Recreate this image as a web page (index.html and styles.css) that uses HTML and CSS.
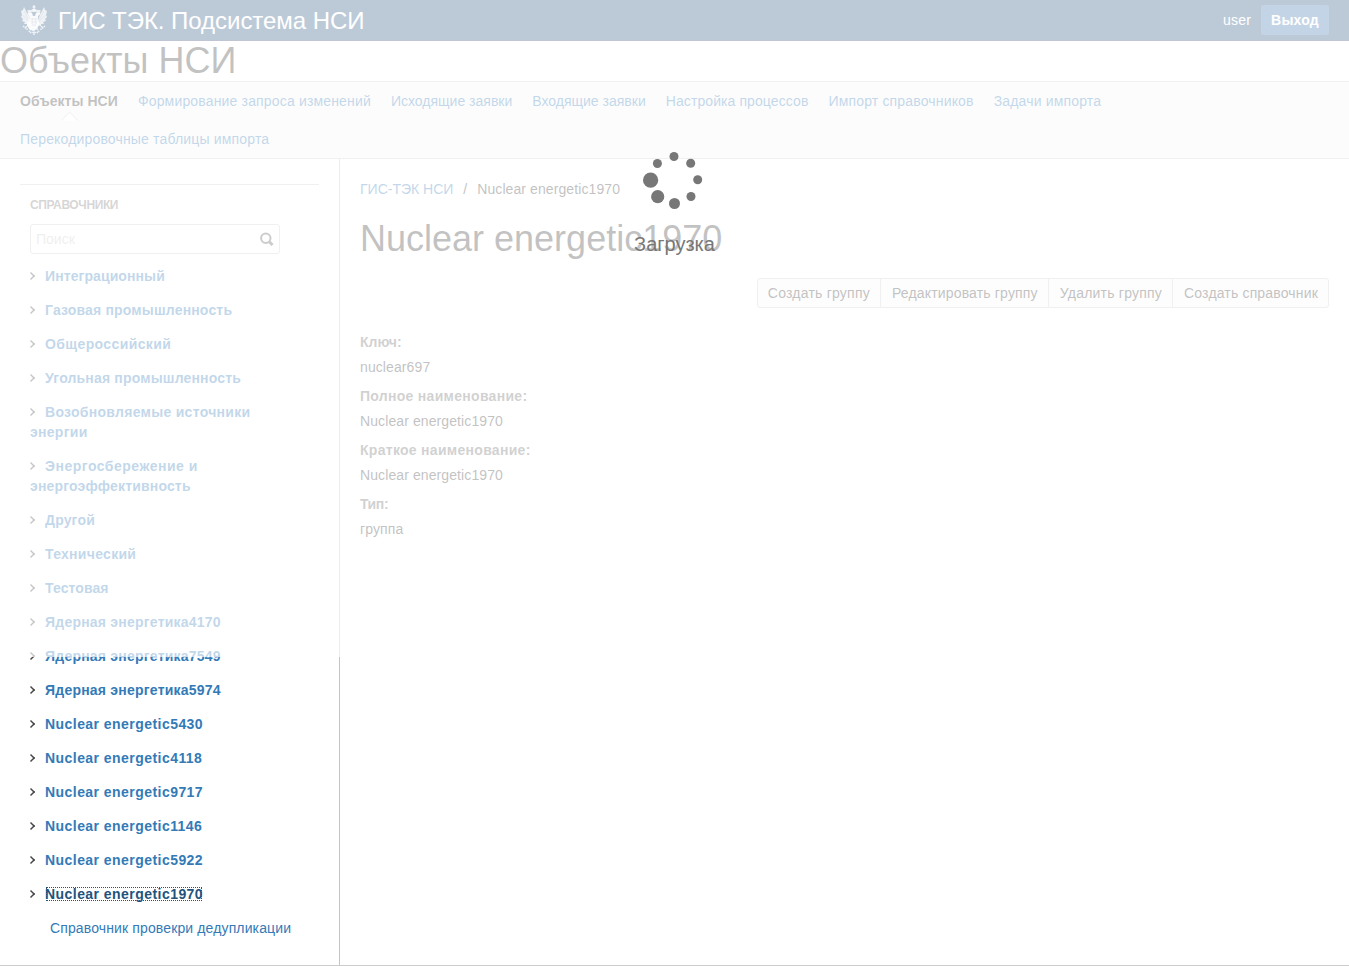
FILE: index.html
```html
<!DOCTYPE html>
<html lang="ru">
<head>
<meta charset="utf-8">
<title>ГИС ТЭК. Подсистема НСИ</title>
<link rel="stylesheet" href="styles.css">
</head>
<body>
<header class="topbar">
  <svg class="emblem" width="26" height="30" viewBox="0 0 26 30" fill="#fff">
    <path d="M13 0v6M11.500 2h3" stroke="#fff" stroke-width="1"/>
    <path d="M11 4h4l1 3h-6zM6.500 5h4v2.500h-4zM15.500 5h4v2.500h-4z" opacity=".75"/>
    <path d="M6 9l2-2 3 1 1 3h2l1-3 3-1 2 2-3 2v4l1 5-2 4-4 2-4-2-2-4 1-5v-4z" opacity=".9"/>
    <path d="M9 15L8 12 4 4 3 2 2 5 0 6l1 4-1 2 2 2-1 2 3 1-1 2 3 0 0 2 4-2zM17 15l1-3 4-8 1-2 1 3 2 1-1 4 1 2-2 2 1 2-3 1 1 2-3 0 0 2-4-2z" opacity=".78"/>
    <path d="M9 18l-5 5M17 18l5 5M2 21l5 4M24 21l-5 4M11 22l-3 5M15 22l3 5M13 22v8M9 27.500h8" stroke="#fff" stroke-width="1.500" stroke-dasharray="1.500 .7" fill="none" opacity=".8"/>
    <path d="M3 6l5 9M1.500 10l7 7M23 6l-5 9M24.500 10l-7 7M5 5l4 9M21 5l-4 9M11 13v6M15 13v6M11 14h4M11 17h4M11 20h4" stroke="#204e7d" stroke-width=".6" fill="none" opacity=".5"/>
  </svg>
  <span class="brand">ГИС ТЭК. Подсистема НСИ</span>
  <span class="user">user</span>
  <button class="logout">Выход</button>
</header>
<h1 class="page-title">Объекты НСИ</h1>
<nav class="menu">
  <a class="menu-item active">Объекты НСИ</a>
  <a class="menu-item ls-2">Формирование запроса изменений</a>
  <a class="menu-item">Исходящие заявки</a>
  <a class="menu-item">Входящие заявки</a>
  <a class="menu-item ls-1">Настройка процессов</a>
  <a class="menu-item ls-2">Импорт справочников</a>
  <a class="menu-item ls-2">Задачи импорта</a>
  <a class="menu-item ls-2">Перекодировочные таблицы импорта</a>
</nav>
<div class="columns">
  <aside class="sidebar">
    <div class="side-head">СПРАВОЧНИКИ</div>
    <div class="search"><span>Поиск</span>
      <svg width="14" height="14" viewBox="0 0 14 14" fill="none" stroke="#555" stroke-width="2"><circle cx="5.800" cy="6.300" r="4.700"/><path d="M9.200 9.700l3.400 3.400" stroke-width="2.800"/></svg>
    </div>
    <ul class="tree">
      <li><i class="chev"></i><a class="ls-1">Интеграционный</a></li>
      <li><i class="chev"></i><a class="ls-2">Газовая промышленность</a></li>
      <li><i class="chev"></i><a class="ls-4">Общероссийский</a></li>
      <li><i class="chev"></i><a class="ls-2">Угольная промышленность</a></li>
      <li><i class="chev"></i><a class="ls-3">Возобновляемые источники<br>энергии</a></li>
      <li><i class="chev"></i><a class="ls-5">Энергосбережение и</a><br><a class="ls-2">энергоэффективность</a></li>
      <li><i class="chev"></i><a class="ls-2">Другой</a></li>
      <li><i class="chev"></i><a class="ls-3">Технический</a></li>
      <li><i class="chev"></i><a class="ls-1">Тестовая</a></li>
      <li><i class="chev"></i><a class="ls-25">Ядерная энергетика4170</a></li>
      <li><i class="chev"></i><a class="ls-25">Ядерная энергетика7549</a></li>
      <li><i class="chev"></i><a class="ls-25">Ядерная энергетика5974</a></li>
      <li><i class="chev"></i><a class="ls-45">Nuclear energetic5430</a></li>
      <li><i class="chev"></i><a class="ls-45">Nuclear energetic4118</a></li>
      <li><i class="chev"></i><a class="ls-45">Nuclear energetic9717</a></li>
      <li><i class="chev"></i><a class="ls-45">Nuclear energetic1146</a></li>
      <li><i class="chev"></i><a class="ls-45">Nuclear energetic5922</a></li>
      <li><i class="chev"></i><a class="ls-45 focused">Nuclear energetic1970</a></li>
      <li class="leaf"><a>Справочник провекри дедупликации</a></li>
    </ul>
  </aside>
  <main class="content">
    <div class="crumbs"><a>ГИС-ТЭК НСИ</a><span class="slash">/</span><span class="ls-1">Nuclear energetic1970</span></div>
    <h2 class="group-title">Nuclear energetic1970</h2>
    <div class="actions">
      <div class="btn-group">
        <button class="ls-25">Создать группу</button>
        <button class="ls-2">Редактировать группу</button>
        <button class="ls-25">Удалить группу</button>
        <button class="ls-2">Создать справочник</button>
      </div>
    </div>
    <dl class="props">
      <dt>Ключ:</dt><dd>nuclear697</dd>
      <dt class="ls-3">Полное наименование:</dt><dd>Nuclear energetic1970</dd>
      <dt class="ls-3">Краткое наименование:</dt><dd>Nuclear energetic1970</dd>
      <dt class="tight">Тип:</dt><dd>группа</dd>
    </dl>
  </main>
</div>
<div class="overlay"></div>
<div class="loader">
  <svg width="60" height="58" viewBox="0 0 60 58" fill="#777">
    <circle cx="31" cy="4.500" r="4.500"/><circle cx="47.700" cy="11.200" r="4.500"/>
    <circle cx="54.700" cy="27.700" r="4.500"/><circle cx="48" cy="44.500" r="4.500"/>
    <circle cx="31.500" cy="51.500" r="5.500"/><circle cx="14.700" cy="44.700" r="6.600"/>
    <circle cx="7.600" cy="28.200" r="7.600"/><circle cx="14.400" cy="11.500" r="4.500"/>
  </svg>
  <div class="loader-text">Загрузка</div>
</div>
</body>
</html>
```
FILE: styles.css
```css
* { box-sizing: border-box; }
body {
  margin: 0;
  height: 966px;
  overflow: hidden;
  position: relative;
  display: flex;
  flex-direction: column;
  background: #fff;
  font: 14px/20px "Liberation Sans", Arial, sans-serif;
  color: #333;
}
button { font: inherit; color: inherit; white-space: nowrap; }
a { color: #337ab7; }

/* Tracking steps */
.ls-1 { letter-spacing: .09px; }
.ls-2 { letter-spacing: .165px; }
.ls-25 { letter-spacing: .22px; }
.ls-3 { letter-spacing: .29px; }
.ls-4 { letter-spacing: .38px; }
.ls-45 { letter-spacing: .45px; }
.ls-5 { letter-spacing: .5px; }
.tight { letter-spacing: -.4px; }

.topbar {
  height: 41px;
  flex: none;
  display: flex;
  align-items: center;
  padding: 0 20px 1px;
  background: #204e7d;
  border-bottom: 1px solid #2b3e6b;
  color: #fff;
}
.emblem { margin: 1px 11px 0 1px; }
.brand { font-size: 24px; line-height: 40px; white-space: nowrap; padding-top: 2px; letter-spacing: -.04px; }
.user { margin-left: auto; margin-right: 10px; letter-spacing: .2px; }
.logout {
  width: 68px;
  height: 30px;
  padding: 0;
  border: 0;
  border-radius: 3px;
  background: #3a71b0;
  font-weight: bold;
  letter-spacing: .2px;
}

.page-title, .group-title { font-size: 36px; line-height: 40px; font-weight: normal; }
.page-title { margin: 0; flex: none; }

.menu {
  height: 78px;
  flex: none;
  display: flex;
  flex-wrap: wrap;
  align-content: flex-start;
  column-gap: 20px;
  padding: 0 20px;
  background: #f6f6f6;
  border-top: 1px solid #ccc;
  border-bottom: 1px solid #ccc;
}
.menu-item { line-height: 38px; height: 38px; white-space: nowrap; }
.active { position: relative; color: #333; font-weight: bold; letter-spacing: .05px; }
.active::after {
  content: "";
  position: absolute;
  left: 50%;
  bottom: -7px;
  width: 12px;
  height: 12px;
  margin-left: -6px;
  background: linear-gradient(135deg, #fff 50%, transparent 50%);
  border-left: 1px solid #ccc;
  border-top: 1px solid #ccc;
  transform: rotate(45deg);
  clip-path: polygon(0 0, 100% 0, 0 100%);
}

.columns { flex: 1; display: flex; border-bottom: 1px solid #ccc; }
.sidebar { width: 340px; flex: none; padding: 25px 20px 0; border-right: 1px solid #c4c4c4; }
.side-head {
  border-top: 1px solid #ccc;
  padding: 10px 10px 0;
  height: 40px;
  font-size: 12px;
  font-weight: bold;
  letter-spacing: -.38px;
  color: #777;
}
.search {
  width: 250px;
  height: 30px;
  margin-left: 10px;
  padding: 0 5px;
  display: flex;
  align-items: center;
  justify-content: space-between;
  border: 1px solid #ccc;
  border-radius: 3px;
  background: #fff;
  color: #c9c9c9;
}
.tree { list-style: none; margin: 12px 0 0; padding: 0 0 0 10px; font-weight: bold; }
.tree li { margin-bottom: 14px; white-space: nowrap; }
.chev {
  display: inline-block;
  width: 8px;
  height: 8px;
  margin: 0 10px 1px -3px;
  border-top: 2px solid #444;
  border-right: 2px solid #444;
  transform: rotate(45deg) scale(.72);
}
.focused { color: #23527c; outline: 1px dotted #23527c; outline-offset: -2px; }
.tree .leaf { padding-left: 20px; font-weight: normal; letter-spacing: .13px; }

.content { flex: 1; padding: 20px 20px 0; }
.crumbs { white-space: nowrap; }
.slash { margin: 0 10px; }
.group-title { margin: 20px 0 19px; }
.actions { display: flex; justify-content: flex-end; }
.btn-group { display: flex; border: 1px solid #ccc; border-radius: 3px; background: #f7f7f7; }
.btn-group button { height: 28px; padding: 0 10px; border: 0; background: none; }
.btn-group button + button { border-left: 1px solid #ccc; padding-left: 11px; }
.props { margin: 24px 0 0; }
.props dt { font-weight: bold; color: #666; margin-bottom: 5px; }
.props dd { margin: 0 0 9px; letter-spacing: .1px; }

.overlay { position: absolute; inset: 0 0 auto; height: 657px; background: rgba(255, 255, 255, .7); }
.loader { position: absolute; top: 152px; left: 575px; width: 199px; text-align: center; color: #777; }
.loader svg { display: block; margin: 0 0 0 68px; }
.loader-text { font-size: 20px; line-height: 24px; margin-top: 22px; }
```
